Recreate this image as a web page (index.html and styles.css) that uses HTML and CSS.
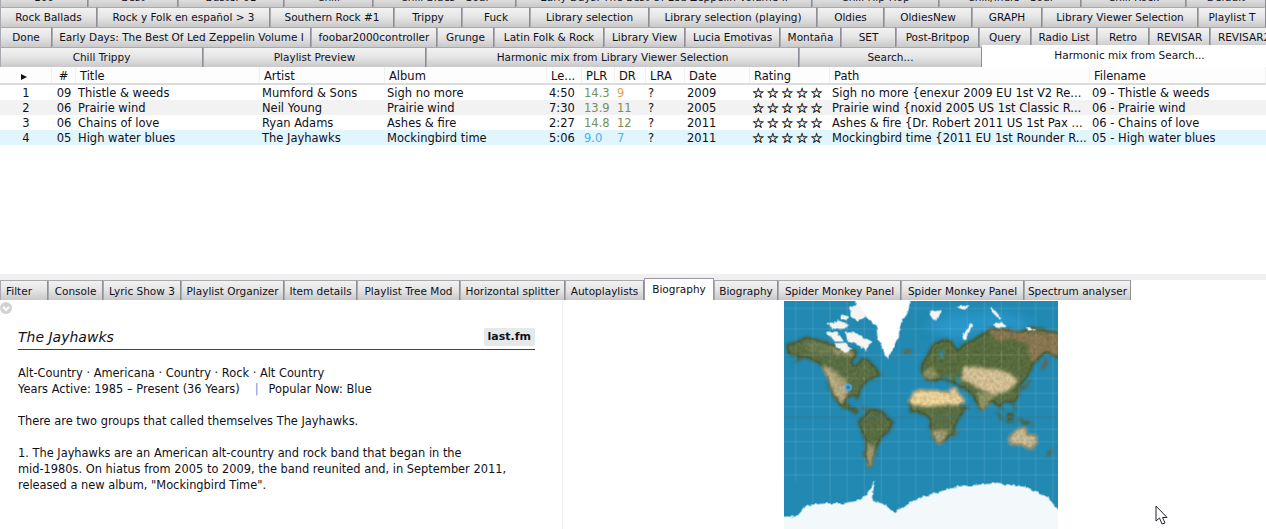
FILE: index.html
```html
<!DOCTYPE html>
<html>
<head>
    <title>Playlist</title>
    <link rel="stylesheet" href="styles.css">
</head>
<body>
    <div class="tabrow first">
        <div class="tab" style="width:88px">100</div><div class="tab" style="width:90px">Best</div><div class="tab" style="width:106px">Buster 01</div><div class="tab" style="width:89px">Chill</div><div class="tab" style="width:143px">Chill Blues - Soul</div><div class="tab" style="width:296px">Early Days: The Best Of Led Zeppelin Volume II</div><div class="tab" style="width:127px">Chill Hip-Hop</div><div class="tab" style="width:142px">Chill/Indie - Soul</div><div class="tab" style="width:105px">Chill Rock</div><div class="tab" style="width:80px">Default</div>
    </div>
    <div class="tabrow">
        <div class="tab" style="width:97px">Rock Ballads</div><div class="tab" style="width:173px">Rock y Folk en español &gt; 3</div><div class="tab" style="width:124px">Southern Rock #1</div><div class="tab" style="width:68px">Trippy</div><div class="tab" style="width:68px">Fuck</div><div class="tab" style="width:119px">Library selection</div><div class="tab" style="width:168px">Library selection (playing)</div><div class="tab" style="width:67px">Oldies</div><div class="tab" style="width:88px">OldiesNew</div><div class="tab" style="width:70px">GRAPH</div><div class="tab" style="width:156px">Library Viewer Selection</div><div class="tab" style="width:68px">Playlist T</div>
    </div>
    <div class="tabrow">
        <div class="tab" style="width:52px">Done</div><div class="tab" style="width:259px">Early Days: The Best Of Led Zeppelin Volume I</div><div class="tab" style="width:126px">foobar2000controller</div><div class="tab" style="width:57px">Grunge</div><div class="tab" style="width:110px">Latin Folk &amp; Rock</div><div class="tab" style="width:81px">Library View</div><div class="tab" style="width:95px">Lucia Emotivas</div><div class="tab" style="width:61px">Montaña</div><div class="tab" style="width:55px">SET</div><div class="tab" style="width:83px">Post-Britpop</div><div class="tab" style="width:52px">Query</div><div class="tab" style="width:66px">Radio List</div><div class="tab" style="width:52px">Retro</div><div class="tab" style="width:61px">REVISAR</div><div class="tab" style="width:68px">REVISAR2</div>
    </div>
    <div class="tabrow">
        <div class="tab" style="width:203px">Chill Trippy</div><div class="tab" style="width:223px">Playlist Preview</div><div class="tab" style="width:373px">Harmonic mix from Library Viewer Selection</div><div class="tab" style="width:183px">Search...</div><div class="tab active wide" style="width:284px">Harmonic mix from Search...</div>
    </div>

    <div class="grid header">
        <div class="play"><span class="arrow"></span></div>
        <div class="c">#</div><div>Title</div><div>Artist</div><div>Album</div><div>Le...</div><div>PLR</div><div>DR</div><div>LRA</div><div>Date</div><div>Rating</div><div>Path</div><div>Filename</div>
    </div>
    <div class="rows">
        <div class="grid row">
            <div class="c">1</div><div class="c">09</div><div>Thistle &amp; weeds</div><div>Mumford &amp; Sons</div><div>Sigh no more</div><div>4:50</div><div class="plr">14.3</div><div class="dr9">9</div><div>?</div><div>2009</div><div class="stars">☆☆☆☆☆</div><div>Sigh no more {enexur 2009 EU 1st V2 Re...</div><div>09 - Thistle &amp; weeds</div>
        </div>
        <div class="grid row alt">
            <div class="c">2</div><div class="c">06</div><div>Prairie wind</div><div>Neil Young</div><div>Prairie wind</div><div>7:30</div><div class="plr">13.9</div><div class="plr">11</div><div>?</div><div>2005</div><div class="stars">☆☆☆☆☆</div><div>Prairie wind {noxid 2005 US 1st Classic R...</div><div>06 - Prairie wind</div>
        </div>
        <div class="grid row">
            <div class="c">3</div><div class="c">06</div><div>Chains of love</div><div>Ryan Adams</div><div>Ashes &amp; fire</div><div>2:27</div><div class="plr">14.8</div><div class="plr">12</div><div>?</div><div>2011</div><div class="stars">☆☆☆☆☆</div><div>Ashes &amp; fire {Dr. Robert 2011 US 1st Pax ...</div><div>06 - Chains of love</div>
        </div>
        <div class="grid row now">
            <div class="c">4</div><div class="c">05</div><div>High water blues</div><div>The Jayhawks</div><div>Mockingbird time</div><div>5:06</div><div class="blue">9.0</div><div class="blue">7</div><div>?</div><div>2011</div><div class="stars">☆☆☆☆☆</div><div>Mockingbird time {2011 EU 1st Rounder R...</div><div>05 - High water blues</div>
        </div>
    </div>

    <div class="splitter"></div>
    <div class="tabrow lower">
        <div class="tab left" style="width:48px">Filter</div><div class="tab" style="width:55px">Console</div><div class="tab" style="width:78px">Lyric Show 3</div><div class="tab" style="width:103px">Playlist Organizer</div><div class="tab" style="width:73px">Item details</div><div class="tab" style="width:103px">Playlist Tree Mod</div><div class="tab" style="width:105px">Horizontal splitter</div><div class="tab" style="width:79px">Autoplaylists</div><div class="tab active" style="width:70px">Biography</div><div class="tab" style="width:64px">Biography</div><div class="tab" style="width:123px">Spider Monkey Panel</div><div class="tab" style="width:123px">Spider Monkey Panel</div><div class="tab" style="width:107px">Spectrum analyser</div>
    </div>

    <div class="bio">
        <div class="text">
            <svg class="chev" width="12" height="12" viewBox="0 0 12 12"><circle cx="6" cy="6" r="6" fill="#d2d2d2"/><path d="M3 5l3 3 3-3" fill="none" stroke="#fff" stroke-width="2"/></svg>
            <div class="head"><i>The Jayhawks</i><b class="badge">last.fm</b></div>
            <p>Alt-Country · Americana · Country · Rock · Alt Country<br>Years Active: 1985 – Present (36 Years)<span class="pipe">|</span>Popular Now: Blue</p>
            <p>There are two groups that called themselves The Jayhawks.</p>
            <p>1. The Jayhawks are an American alt-country and rock band that began in the<br>mid-1980s. On hiatus from 2005 to 2009, the band reunited and, in September 2011,<br>released a new album, "Mockingbird Time".</p>
        </div>
        <div class="mapside">
            <svg class="map" width="274" height="228" viewBox="432 93 822 684">
                <defs>
                    <filter id="ice" x="-5%" y="-5%" width="110%" height="110%" color-interpolation-filters="sRGB">
                        <feTurbulence type="fractalNoise" baseFrequency="0.06" numOctaves="3" seed="4" result="n"/>
                        <feDisplacementMap in="SourceGraphic" in2="n" scale="12" xChannelSelector="R" yChannelSelector="G"/>
                        <feGaussianBlur stdDeviation="1.2"/>
                    </filter>
                    <filter id="land" x="-5%" y="-5%" width="110%" height="110%" color-interpolation-filters="sRGB">
                        <feTurbulence type="fractalNoise" baseFrequency="0.06" numOctaves="3" seed="4" result="n"/>
                        <feDisplacementMap in="SourceGraphic" in2="n" scale="12" xChannelSelector="R" yChannelSelector="G" result="shape"/>
                        <feGaussianBlur in="shape" stdDeviation="4" result="soft"/>
                        <feTurbulence type="fractalNoise" baseFrequency="0.1" numOctaves="2" seed="9"/>
                        <feColorMatrix values="1 0 0 0 0 1 0 0 0 0 1 0 0 0 0 0 0 0 0 1" result="grain"/>
                        <feComposite in="soft" in2="grain" operator="arithmetic" k1="0.3" k2="0.9" k3="0" k4="0"/>
                    </filter>
                    <filter id="haze">
                        <feGaussianBlur stdDeviation="14"/>
                    </filter>
                </defs>
                <rect x="432" y="93" width="822" height="684" fill="#2189b2"/>
                <path d="M850 170L930 130L1090 125L1190 160L1140 180L1040 180L940 210Z" fill="#2c9bd2" opacity=".7" filter="url(#haze)"/>

                <g filter="url(#land)">
                    <!-- north america -->
                    <g transform="translate(432 90)">
                        <path d="M5 135L70 110L110 120L145 132L180 152L218 148L218 170L204 185L212 198L235 172L252 178L272 198L294 226L272 234L252 242L234 262L224 285L222 302L205 288L192 292L182 315L197 324L217 320L222 337L200 332L175 322L153 300L133 255L123 215L98 187L60 172L25 192L45 170L15 165Z" fill="#55683e"/>
                        <path d="M60 122L110 127L150 142L130 165L100 160L70 150Z" fill="#65744a"/>
                        <path d="M140 140L210 155L205 170L180 165L150 165Z" fill="#8b875e"/>
                        <path d="M112 200L135 200L165 235L190 250L195 275L180 300L170 310L150 280L135 245Z" fill="#ae9f79"/>
                        <path d="M135 195L170 230L190 240L185 255L165 245L140 215Z" fill="#939263"/>
                        <path d="M225 318L255 328L245 331Z M262 332L280 336L268 340Z" fill="#5c6c42"/>
                        <ellipse cx="370" cy="154" rx="11" ry="6" fill="#70734f"/>
                    </g>
                    <!-- central and south america -->
                    <path d="M610 392L640 415L660 430L650 433L625 415Z" fill="#55683e"/>
                    <path d="M660 450L690 415L725 420L760 455L750 480L725 505L710 540L695 590L685 595L672 560L675 505L655 470Z" fill="#53663c"/>
                    <path d="M680 520L708 530L695 590L682 590Z" fill="#958f68"/>
                    <!-- africa -->
                    <path d="M805 395L820 365L850 358L885 358L925 365L950 385L965 410L990 408L960 440L945 470L945 490L920 510L895 525L878 505L868 470L870 445L845 430L815 428Z" fill="#55683e"/>
                    <path d="M805 395L820 365L850 358L885 358L925 365L935 385L960 405L920 405L860 408L815 405Z" fill="#dcc48e"/>
                    <path d="M925 358L950 355L975 395L960 405L940 395Z" fill="#d8c08e"/>
                    <path d="M872 482L925 482L905 522L892 525Z" fill="#9c946c"/>
                    <path d="M958 474L948 498L942 492Z" fill="#7c7a52"/>
                    <!-- eurasia -->
                    <g transform="translate(840 90)">
                        <path d="M15 240L0 200L15 175L40 130L75 118L95 125L110 150L135 130L180 105L225 80L290 95L340 80L400 95L430 100V180L375 160L340 195L330 220L295 265L300 285L280 310L245 305L250 335L225 310L195 300L178 330L160 290L135 270L100 250L70 240L35 245Z" fill="#53663a"/>
                        <path d="M200 85L300 95L430 100V170L370 155L335 190L320 130L270 115L230 125Z" fill="#806f4b"/>
                        <path d="M130 200L210 205L260 215L290 235L285 255L240 290L210 280L170 260L125 240Z" fill="#c6b38a"/>
                        <path d="M0 225L30 200L60 225L30 240Z" fill="#84885a"/>
                        <path d="M220 285L285 270L270 305L230 305Z" fill="#566a3d"/>
                        <path d="M170 275L225 285L195 330L180 330Z" fill="#84885a"/>
                        <path d="M378 175L362 212L370 208L384 186Z" fill="#806f4b"/>
                        <path d="M305 262L335 235L328 250L300 274Z" fill="#6d7049"/>
                        <ellipse cx="115" cy="242" rx="5" ry="14" fill="#2189b2"/>
                        <ellipse cx="78" cy="234" rx="18" ry="4" fill="#2189b2"/>
                        <path d="M62 152L72 148L66 170L58 168Z" fill="#2189b2"/>
                    </g>
                    <!-- asian islands and australia -->
                    <path d="M1065 420L1092 447L1082 450Z M1095 452L1140 460L1100 458Z M1100 430L1122 428L1118 452L1102 448Z M1118 395L1128 425L1120 420Z M1130 445L1185 463L1150 464Z" fill="#566a3d"/>
                    <path d="M1102 505L1130 475L1155 470L1165 490L1190 495L1192 525L1170 540L1140 525L1110 525Z" fill="#b8ab85"/>
                    <path d="M1250 525L1228 560L1222 555Z M1174 545L1184 545L1178 552Z" fill="#6d7049"/>
                </g>

                <g filter="url(#ice)">
                    <g transform="translate(432 90)">
                        <path d="M205 -10H382L370 40L350 70L345 100L330 140L310 178L297 150L280 110L278 80L250 55L232 35Z" fill="#fff"/>
                        <path d="M170 42L195 50L190 62L170 55Z M130 70L165 62L195 75L175 90L145 85Z M195 20L225 15L245 50L220 65L200 50Z M125 95L160 95L180 125L150 125Z M185 95L215 100L265 125L245 150L210 130L190 125Z M150 130L185 128L205 150L180 160Z" fill="#f4f5f2"/>
                    </g>
                    <path d="M990 160L965 205L975 208L1000 165Z M870 125L905 120L890 155L875 145Z M950 110L990 105L970 120Z M1055 110L1085 145L1075 145L1055 125Z M1055 165L1080 155L1102 170L1090 175Z M1155 170L1190 180L1165 182Z" fill="#f4f6f5"/>
                    <path d="M420 740L470 740L500 705L560 700L610 700L660 690L690 660L705 630L695 690L740 705L760 730L790 710L850 680L950 650L1060 640L1150 650L1220 680L1270 735V790H420Z" fill="#f3f8fb"/>
                </g>

                <path d="M467 93V640M518 93V700M570 93V700M621 93V700M673 93V700M724 93V700M776 93V700M827 93V700M878 93V680M930 93V670M981 93V650M1033 93V640M1084 93V650M1136 93V650M1187 93V670M1238 93V720M432 115H1254M432 177H1254M432 255H1254M432 325H1254M432 370H1254M432 410H1254M432 478H1254M432 515H1254M432 565H1254M432 615H1254" stroke="#fff" stroke-width="2" fill="none" opacity=".2"/>
                <path d="M432 442H1254" stroke="#44708a" stroke-width="2"/>
                <circle cx="625" cy="352" r="8" fill="#2d6fa0" stroke="#4aa8f0" stroke-width="6"/>
            </svg>
        </div>
    </div>

    <svg class="cursor" width="14" height="21" viewBox="0 0 14 21"><path d="M1 1V16L4.500 13L7 19L10 18L7.500 12.500H12Z" fill="#fff" stroke="#223" stroke-width="1"/></svg>
</body>
</html>
```
FILE: styles.css
```css
html, body {
    margin: 0;
    height: 529px;
    overflow: hidden;
    background-color: #fff;
}
body {
    font-family: "DejaVu Sans", sans-serif;
    font-size: 11.500px;
    color: #10101a;
    position: relative;
}
.tabrow {
    display: flex;
    height: 20px;
    width: 1266px;
    font-size: 10.500px;
}
.tabrow.first {
    height: 7px;
    align-items: flex-end;
}
.tabrow.first .tab {
    height: 20px;
}
.tab {
    box-sizing: border-box;
    height: 20px;
    flex: none;
    text-align: center;
    line-height: 18px;
    white-space: nowrap;
    overflow: hidden;
    border: 1px solid #aaa9b0;
    border-bottom: none;
    border-right-color: #8f8e96;
    background: linear-gradient(#f2f2f2, #e4e4e4 50%, #c9c9c9);
}
.tab.left {
    text-align: left;
    padding-left: 5px;
}
.tab.active {
    height: 22px;
    margin-top: -2px;
    background: #fff;
    border: none;
    line-height: 20px;
    position: relative;
}
.tab.wide {
    padding-left: 11px;
}
.grid {
    display: grid;
    grid-template-columns: 52px 24px 184px 125px 162px 35px 33px 31px 39px 65px 80px 260px 176px;
}
.grid > div {
    padding: 1px 0 0 2px;
    white-space: nowrap;
    overflow: hidden;
}
.grid > .c {
    padding-left: 0;
    text-align: center;
}
.header {
    height: 18px;
    line-height: 16px;
    box-sizing: border-box;
    border-bottom: 2px solid #dcdcdc;
    background-color: #fdfdfd;
}
.header > div {
    padding-left: 4px;
    border-right: 1px solid #f0f0f0;
}
.arrow {
    display: inline-block;
    margin-left: 17px;
    border-left: 6px solid #111;
    border-top: 3px solid transparent;
    border-bottom: 3px solid transparent;
}
.rows {
    height: 189px;
}
.row {
    height: 15px;
    line-height: 15px;
}
.row.alt {
    background-color: #f2f2f2;
}
.row.now {
    background-color: #e0f5fd;
}
.plr {
    color: #74905a;
}
.dr9 {
    color: #e0a050;
}
.blue {
    color: #4ab0f0;
}
.grid > .stars {
    font-size: 14px;
    letter-spacing: 2px;
    color: #000;
    -webkit-text-stroke: 0.3px #000;
}
.splitter {
    height: 4px;
    background-color: #f0f0f0;
}
.lower {
    height: 22px;
    background: linear-gradient(#f0f0f0 2px, #fff 2px);
}
.lower .tab {
    margin-top: 2px;
    height: 20px;
    line-height: 20px;
}
.lower .tab.active {
    margin-top: 0;
    height: 22px;
    line-height: 20px;
    border: 1px solid #9a99a4;
    border-bottom: none;
}
.bio {
    display: flex;
    height: 229px;
}
.text {
    position: relative;
    box-sizing: border-box;
    width: 563px;
    padding: 24px 27px 0 18px;
    border-right: 1px solid #eee;
    font-size: 11.400px;
    line-height: 16px;
}
.chev {
    position: absolute;
    left: 0;
    top: 2px;
}
.head {
    display: flex;
    justify-content: space-between;
    align-items: center;
    height: 25px;
    border-bottom: 1px solid #444;
    font-size: 14px;
}
.badge {
    font-size: 11px;
    background-color: #e6e9e9;
    padding: 1px 4px;
    border-radius: 2px;
}
p {
    margin: 15px 0 16px;
}
.pipe {
    color: #3f95d8;
    margin: 0 10px 0 15px;
}
.mapside {
    flex: 1;
    padding: 1px 0 0 221px;
}
.map {
    display: block;
}
.cursor {
    position: absolute;
    left: 1155px;
    top: 505px;
}
```
